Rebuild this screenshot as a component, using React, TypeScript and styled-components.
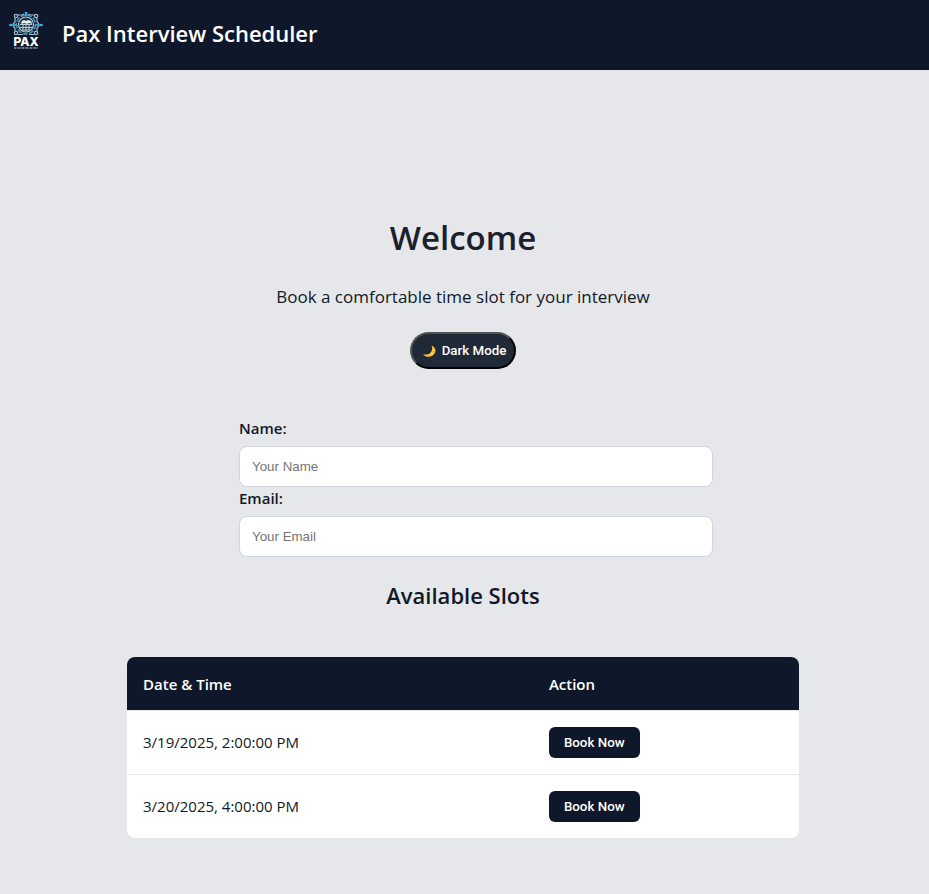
import React, { useState } from "react";
import styled, { createGlobalStyle } from "styled-components";

const GlobalStyle = createGlobalStyle`
  body {
    margin: 0;
    background: #e5e7eb;
    color: #111827;
    font-family: "Segoe UI", "Open Sans", "Noto Sans", sans-serif;
    font-size: 15px;
    line-height: 21px;
  }
`;

const Header = styled.header`
  display: flex;
  align-items: center;
  gap: 18px;
  height: 70px;
  padding: 0 8px;
  box-sizing: border-box;
  background: #0f172a;
  color: #fff;
`;

const Logo = styled.svg`
  width: 36px;
  height: 40px;
  margin-bottom: 8px;
`;

const Brand = styled.h1`
  margin: 0 0 4px;
  font-size: 22px;
  line-height: 32px;
  font-weight: 600;
`;

const Main = styled.main`
  display: flex;
  flex-direction: column;
  align-items: center;
  padding: 144px 3px 48px 0;
`;

const Welcome = styled.h2`
  margin: 0;
  font-size: 33px;
  line-height: 48px;
  font-weight: 600;
  color: #1a202c;
`;

const Intro = styled.p`
  margin: 22px 0;
  font-size: 17px;
  line-height: 26px;
`;

const ModeButton = styled.button`
  display: flex;
  align-items: center;
  gap: 5px;
  height: 37px;
  padding: 0 8px 0 10px;
  border: 2px outset #000;
  border-radius: 20px;
  background: #1f2937;
  color: #fff;
  font-family: Roboto, sans-serif;
  font-weight: 500;
  cursor: pointer;
`;

const Moon = styled.svg`
  width: 15px;
  height: 15px;
`;

const Form = styled.form`
  width: calc(100% - 56px);
  max-width: 448px;
  margin-top: 48px;
`;

const Label = styled.label`
  display: block;
  margin-bottom: 6px;
  line-height: 23px;
  font-weight: 600;
`;

const Field = styled.input`
  display: block;
  width: 100%;
  padding: 12px;
  border: 1px solid #d1d5db;
  border-radius: 8px;
  background: #fff;
  color: #111827;
  font-family: "Liberation Sans", Arial, sans-serif;
  &::placeholder {
    color: #757575;
  }
`;

const SlotsTitle = styled.h2`
  margin: 22px 0 46px;
  font-size: 22px;
  line-height: 32px;
  font-weight: 600;
`;

const Slots = styled.table`
  width: calc(100% - 32px);
  max-width: 672px;
  border-spacing: 0;
  border-radius: 8px;
  overflow: hidden;
  background: #fff;
  text-align: left;
  table-layout: fixed;
`;

const HeadCell = styled.th<{ $width?: string }>`
  width: ${(p) => p.$width ?? "auto"};
  box-sizing: border-box;
  padding: 17px 16px 15px;
  background: #0f172a;
  color: #fff;
  font-weight: 600;
`;

const Cell = styled.td`
  padding: 16px;
  border-top: 1px solid #e5e7eb;
`;

const BookButton = styled.button`
  display: block;
  height: 31px;
  padding: 0 15px;
  border: 0;
  border-radius: 6px;
  background: #0f172a;
  color: #fff;
  font-family: Roboto, sans-serif;
  font-weight: 500;
  cursor: pointer;
`;

const slots = ["3/19/2025, 2:00:00 PM", "3/20/2025, 4:00:00 PM"];

const PaxLogo = () => (
  <Logo viewBox="0 0 36 40" role="img" aria-label="Pax logo" fill="none">
    <g stroke="#9fbccb" strokeWidth="1.2">
      <circle cx="8" cy="5" r="1.7" />
      <circle cx="28" cy="5" r="1.7" />
      <circle cx="8" cy="22" r="1.7" />
      <circle cx="28" cy="22" r="1.7" />
      <path d="M10 4h4l2-1M26 4h-4l-2-1M7 7v4l-2 2M29 7v4l2 2M7 20v-3l-2-2M29 20v-3l2-2M10 23.5h5M26 23.5h-5" />
    </g>
    <g stroke="#3a9cc9">
      <path d="M3 14h5M28 14h5M18 2v3" strokeWidth="2" />
      <circle cx="18" cy="13.5" r="9.5" strokeWidth="1.6" strokeDasharray="5 1.5" />
    </g>
    <circle cx="2.5" cy="14" r="1.3" fill="#52b4dc" />
    <circle cx="33.5" cy="14" r="1.3" fill="#52b4dc" />
    <circle cx="18" cy="2" r="1.3" fill="#52b4dc" />
    <circle cx="18" cy="13.5" r="7.5" fill="#1c3445" stroke="#c1d0d7" strokeWidth="1.1" />
    <path d="M13 12l1-2 2-1 2 1 2-1 3 1 1 3-3-1-2 1-3-1-2 1z" fill="#e8eef0" />
    <path d="M12 13.5h12M12 16.5h12M14 19h8M15 13v6M18 13v7M21 13v6" stroke="#b9ccd5" strokeWidth="1" />
    <text x="18" y="35" textAnchor="middle" fill="#fff" fontFamily="Inter, sans-serif" fontWeight="800" fontSize="12">PAX</text>
    <path d="M6 37h24" stroke="#8796a0" strokeWidth="1.6" strokeDasharray="2 .5 1 .5" />
  </Logo>
);

export default function App() {
  const [name, setName] = useState("");
  const [email, setEmail] = useState("");
  return (
    <>
      <GlobalStyle />
      <Header>
        <PaxLogo />
        <Brand>Pax Interview Scheduler</Brand>
      </Header>
      <Main>
        <Welcome>Welcome</Welcome>
        <Intro>Book a comfortable time slot for your interview</Intro>
        <ModeButton type="button">
          <Moon viewBox="0 0 15 15" aria-hidden="true">
            <path d="M9.5 2.5C13 4 14.2 7.2 12.8 10C11 14 5 15.4 1 11.4C5 12 8 11 9.3 8.4C10.5 6.5 10.5 4.6 9.5 2.5Z" fill="#ffc83d" />
            <circle cx="11.3" cy="8.8" r=".8" fill="#e9a92c" />
            <circle cx="7.5" cy="12.2" r=".7" fill="#e9a92c" />
          </Moon>
          Dark Mode
        </ModeButton>
        <Form onSubmit={(e) => e.preventDefault()}>
          <Label htmlFor="name">Name:</Label>
          <Field id="name" placeholder="Your Name" value={name} onChange={(e) => setName(e.target.value)} />
          <Label htmlFor="email">Email:</Label>
          <Field id="email" type="email" placeholder="Your Email" value={email} onChange={(e) => setEmail(e.target.value)} />
        </Form>
        <SlotsTitle>Available Slots</SlotsTitle>
        <Slots>
          <thead>
            <tr>
              <HeadCell scope="col" $width="60.4%">Date &amp; Time</HeadCell>
              <HeadCell scope="col">Action</HeadCell>
            </tr>
          </thead>
          <tbody>
            {slots.map((slot) => (
              <tr key={slot}>
                <Cell>{slot}</Cell>
                <Cell><BookButton type="button">Book Now</BookButton></Cell>
              </tr>
            ))}
          </tbody>
        </Slots>
      </Main>
    </>
  );
}
